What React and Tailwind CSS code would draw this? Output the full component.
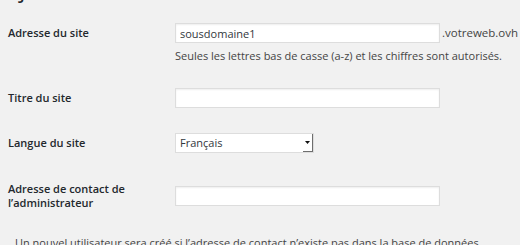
export default function App() {
  const inputCls =
    "w-[265px] h-[20px] bg-white border border-[#dddddd] shadow-[inset_0_1px_2px_rgba(0,0,0,0.07)] px-[4px] text-[11px] leading-[18px] text-[#32373c] outline-none";
  const labelCls = "w-[175px] pl-[8px] text-[11px] font-semibold leading-[20px]";

  return (
    <div className="min-h-screen h-[245px] overflow-hidden bg-[#f1f1f1] font-['Open_Sans',sans-serif] text-[#23282d]">
      <h1 className="-mt-[26px] pl-[5px] text-[23px] leading-[29px] font-normal">
        Ajouter un nouveau site
      </h1>

      <div className="mt-[20px]">
        <div className="flex items-center">
          <label className={labelCls}>Adresse du site</label>
          <input className={inputCls} defaultValue="sousdomaine1" />
          <span className="ml-[2px] text-[11.5px] text-[#444444]">.votreweb.ovh</span>
        </div>
        <p className="mt-[3px] ml-[175px] text-[11px] leading-[20px] text-[#444444]">
          Seules les lettres bas de casse (a-z) et les chiffres sont autorisés.
        </p>
      </div>

      <div className="mt-[22px] flex items-center">
        <label className={labelCls}>Titre du site</label>
        <input className={inputCls} />
      </div>

      <div className="mt-[25px] flex items-center">
        <label className={labelCls}>Langue du site</label>
        <div className="flex w-[139px] h-[20px] bg-white border border-[#dddddd]">
          <span className="flex-1 pl-[4px] text-[11px] leading-[18px] text-[#32373c]">Français</span>
          <div className="flex w-[10px] items-center justify-center border-r border-b border-[#6e6e6e]">
            <svg width="5" height="3" viewBox="0 0 5 3">
              <path d="M0 0h5L2.5 3z" fill="#111" />
            </svg>
          </div>
        </div>
      </div>

      <div className="mt-[29px] flex items-center">
        <label className="w-[175px] pl-[8px] text-[11px] font-semibold leading-[14px]">
          Adresse de contact de
          <br />
          l’administrateur
        </label>
        <input className={inputCls} />
      </div>

      <p className="mt-[23px] pl-[15px] text-[11px] leading-[20px] text-[#444444]">
        Un nouvel utilisateur sera créé si l’adresse de contact n’existe pas dans la base de données.
      </p>
    </div>
  );
}
